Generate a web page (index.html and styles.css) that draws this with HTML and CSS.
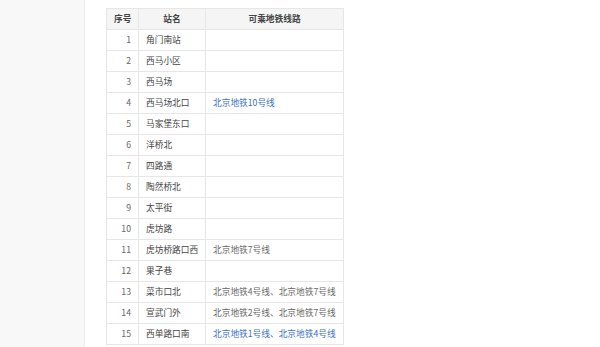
FILE: index.html
```html
<!DOCTYPE html>
<html lang="zh">
<head>
<meta charset="utf-8">
<link rel="stylesheet" href="styles.css">
</head>
<body>
<div class="page">
  <aside class="side"></aside>
  <main class="main">
    <table class="stations">
      <colgroup><col class="c1"><col class="c2"><col class="c3"></colgroup>
      <thead>
        <tr><th>序号</th><th>站名</th><th>可乘地铁线路</th></tr>
      </thead>
      <tbody>
        <tr><td class="num">1</td><td>角门南站</td><td></td></tr>
        <tr><td class="num">2</td><td>西马小区</td><td></td></tr>
        <tr><td class="num">3</td><td>西马场</td><td></td></tr>
        <tr><td class="num">4</td><td>西马场北口</td><td class="link">北京地铁10号线</td></tr>
        <tr><td class="num">5</td><td>马家堡东口</td><td></td></tr>
        <tr><td class="num">6</td><td>洋桥北</td><td></td></tr>
        <tr><td class="num">7</td><td>四路通</td><td></td></tr>
        <tr><td class="num">8</td><td>陶然桥北</td><td></td></tr>
        <tr><td class="num">9</td><td>太平街</td><td></td></tr>
        <tr><td class="num">10</td><td>虎坊路</td><td></td></tr>
        <tr><td class="num">11</td><td>虎坊桥路口西</td><td class="line">北京地铁7号线</td></tr>
        <tr><td class="num">12</td><td>果子巷</td><td></td></tr>
        <tr><td class="num">13</td><td>菜市口北</td><td class="line">北京地铁4号线、北京地铁7号线</td></tr>
        <tr><td class="num">14</td><td>宣武门外</td><td class="line">北京地铁2号线、北京地铁7号线</td></tr>
        <tr><td class="num">15</td><td>西单路口南</td><td class="link">北京地铁1号线、北京地铁4号线</td></tr>
      </tbody>
    </table>
  </main>
</div>
</body>
</html>
```
FILE: styles.css
```css
html, body {
  margin: 0;
  padding: 0;
  background: #ffffff;
}
body {
  font-family: "Noto Sans CJK SC", "Noto Sans", sans-serif;
  font-size: 8.7px;
  color: #333333;
}
.page {
  display: flex;
  min-height: 347px;
}
.side {
  width: 84px;
  flex: none;
  background: #f8f8f8;
  border-right: 1px solid #ebebeb;
}
.main {
  flex: 1;
  padding: 8px 0 0 21px;
}
.stations {
  border-collapse: collapse;
  width: 237px;
  table-layout: fixed;
}
.c1 { width: 32px; }
.c2 { width: 67px; }
.c3 { width: 138px; }
.stations th,
.stations td {
  border: 1px solid #e6e6e6;
  height: 20px;
  padding: 0 7px;
  line-height: 20px;
  white-space: nowrap;
  box-sizing: border-box;
}
.stations th {
  background: #f5f5f5;
  font-weight: bold;
  color: #444444;
  text-align: center;
}
.stations td {
  text-align: left;
  color: #444444;
}
.stations td.num {
  text-align: right;
  color: #666666;
}
.stations td.line {
  color: #666666;
}
.stations td.link {
  color: #3b6fc4;
}
```
